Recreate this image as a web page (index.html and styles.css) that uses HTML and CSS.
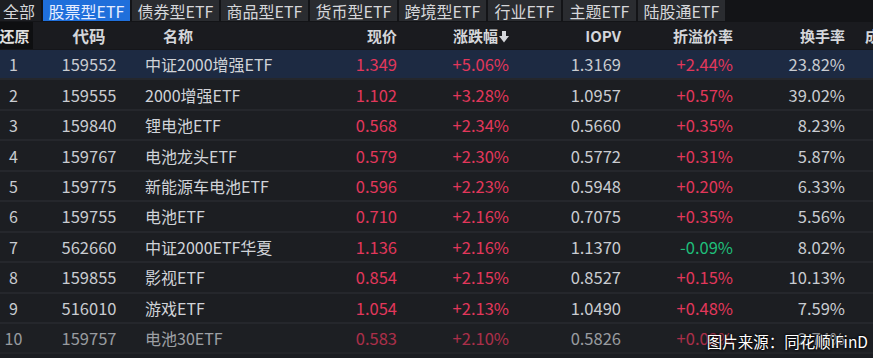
FILE: index.html
```html
<!DOCTYPE html>
<html lang="zh-CN">
<head>
<meta charset="utf-8">
<link rel="stylesheet" href="styles.css">
</head>
<body>
<div class="screen">
  <div class="tabs">
    <div class="tab first">全部</div>
    <div class="tab active">股票型ETF</div>
    <div class="tab">债券型ETF</div>
    <div class="tab">商品型ETF</div>
    <div class="tab">货币型ETF</div>
    <div class="tab">跨境型ETF</div>
    <div class="tab short">行业ETF</div>
    <div class="tab short">主题ETF</div>
    <div class="tab">陆股通ETF</div>
  </div>
  <div class="row head">
    <div class="c-no restore">还原</div>
    <div class="c-code">代码</div>
    <div class="c-name hname">名称</div>
    <div class="c-num">现价</div>
    <div class="c-num">涨跌幅<svg class="arrow" width="10" height="12" viewBox="0 0 10 12"><rect x="3" y="0" width="4" height="6" fill="#d4d6da"/><polygon points="0,5 10,5 5,11.5" fill="#d4d6da"/></svg></div>
    <div class="c-num">IOPV</div>
    <div class="c-num">折溢价率</div>
    <div class="c-num">换手率</div>
    <div class="c-last">成交额</div>
  </div>
  <div class="row sel">
    <div class="c-no">1</div><div class="c-code">159552</div><div class="c-name">中证2000增强ETF</div>
    <div class="c-num up">1.349</div><div class="c-num up">+5.06%</div><div class="c-num">1.3169</div><div class="c-num up">+2.44%</div><div class="c-num">23.82%</div><div class="c-last"></div>
  </div>
  <div class="row">
    <div class="c-no">2</div><div class="c-code">159555</div><div class="c-name">2000增强ETF</div>
    <div class="c-num up">1.102</div><div class="c-num up">+3.28%</div><div class="c-num">1.0957</div><div class="c-num up">+0.57%</div><div class="c-num">39.02%</div><div class="c-last"></div>
  </div>
  <div class="row">
    <div class="c-no">3</div><div class="c-code">159840</div><div class="c-name">锂电池ETF</div>
    <div class="c-num up">0.568</div><div class="c-num up">+2.34%</div><div class="c-num">0.5660</div><div class="c-num up">+0.35%</div><div class="c-num">8.23%</div><div class="c-last"></div>
  </div>
  <div class="row">
    <div class="c-no">4</div><div class="c-code">159767</div><div class="c-name">电池龙头ETF</div>
    <div class="c-num up">0.579</div><div class="c-num up">+2.30%</div><div class="c-num">0.5772</div><div class="c-num up">+0.31%</div><div class="c-num">5.87%</div><div class="c-last"></div>
  </div>
  <div class="row">
    <div class="c-no">5</div><div class="c-code">159775</div><div class="c-name">新能源车电池ETF</div>
    <div class="c-num up">0.596</div><div class="c-num up">+2.23%</div><div class="c-num">0.5948</div><div class="c-num up">+0.20%</div><div class="c-num">6.33%</div><div class="c-last"></div>
  </div>
  <div class="row">
    <div class="c-no">6</div><div class="c-code">159755</div><div class="c-name">电池ETF</div>
    <div class="c-num up">0.710</div><div class="c-num up">+2.16%</div><div class="c-num">0.7075</div><div class="c-num up">+0.35%</div><div class="c-num">5.56%</div><div class="c-last"></div>
  </div>
  <div class="row">
    <div class="c-no">7</div><div class="c-code">562660</div><div class="c-name">中证2000ETF华夏</div>
    <div class="c-num up">1.136</div><div class="c-num up">+2.16%</div><div class="c-num">1.1370</div><div class="c-num down">-0.09%</div><div class="c-num">8.02%</div><div class="c-last"></div>
  </div>
  <div class="row">
    <div class="c-no">8</div><div class="c-code">159855</div><div class="c-name">影视ETF</div>
    <div class="c-num up">0.854</div><div class="c-num up">+2.15%</div><div class="c-num">0.8527</div><div class="c-num up">+0.15%</div><div class="c-num">10.13%</div><div class="c-last"></div>
  </div>
  <div class="row">
    <div class="c-no">9</div><div class="c-code">516010</div><div class="c-name">游戏ETF</div>
    <div class="c-num up">1.054</div><div class="c-num up">+2.13%</div><div class="c-num">1.0490</div><div class="c-num up">+0.48%</div><div class="c-num">7.59%</div><div class="c-last"></div>
  </div>
  <div class="row dim">
    <div class="c-no">10</div><div class="c-code">159757</div><div class="c-name">电池30ETF</div>
    <div class="c-num up">0.583</div><div class="c-num up">+2.10%</div><div class="c-num">0.5826</div><div class="c-num up">+0.02%</div><div class="c-num">2.74%</div><div class="c-last"></div>
  </div>
  <div class="watermark">图片来源：同花顺iFinD</div>
</div>
</body>
</html>
```
FILE: styles.css
```css
html, body {
  margin: 0;
  padding: 0;
  background: #1b1d21;
  overflow: hidden;
}
.screen {
  position: relative;
  width: 873px;
  height: 358px;
  overflow: hidden;
  font-family: "Noto Sans CJK SC", "Noto Sans", sans-serif;
  color: #c9ccd1;
}
.tabs {
  display: flex;
  gap: 2px;
  height: 22px;
  background: #131417;
}
.tab {
  height: 21px;
  display: flex;
  align-items: center;
  justify-content: center;
  width: 87px;
  background: #2a2c30;
  color: #d6d7da;
  font-size: 16px;
  line-height: 1;
  white-space: nowrap;
}
.tab.first {
  width: 41px;
  background: #1d1e22;
  justify-content: flex-start;
  padding-left: 3px;
  box-sizing: border-box;
}
.tab.active {
  background: #1f6fdb;
  color: #e6edff;
}
.tab.short {
  width: 73px;
}
.row {
  display: grid;
  grid-template-columns: 33px 112px 141px 112px 112px 112px 112px 112px 40px;
  height: 28.44px;
  align-items: center;
  background: #1c1e22;
  border-bottom: 2px solid #25272c;
  font-size: 16px;
  white-space: nowrap;
}
.row.head {
  height: 27px;
  border-bottom: 1px solid #15161a;
  background: #1a1b1f;
  font-size: 15px;
  font-weight: bold;
  color: #d4d6da;
}
.row.sel {
  background: #1d2a42;
}
.row.dim {
  opacity: 0.72;
  background: #1e2024;
}
.c-no {
  text-align: center;
  padding-right: 6px;
}
.restore {
  align-self: stretch;
  display: flex;
  align-items: center;
  justify-content: center;
  padding: 0;
  background: #0e0f11;
  color: #e0e0e0;
  margin-left: -4px;
}
.c-code {
  text-align: center;
  font-size: 16.5px;
}
.c-name {
  text-align: left;
  color: #d0d3d8;
}
.hname {
  padding-left: 18px;
  color: #d4d6da;
}
.c-num {
  text-align: right;
  padding-right: 1px;
}
.row:not(.head) .c-num {
  font-size: 16.5px;
}
.c-last {
  padding-left: 19px;
}
.arrow {
  vertical-align: -1px;
  margin-left: 1px;
}
.up {
  color: #e2375b;
}
.down {
  color: #1fbf7a;
}
.watermark {
  position: absolute;
  right: 5px;
  bottom: 6px;
  font-size: 15.5px;
  color: #ffffff;
  text-shadow: 0 0 3px #000, 0 0 2px #000;
}
```
